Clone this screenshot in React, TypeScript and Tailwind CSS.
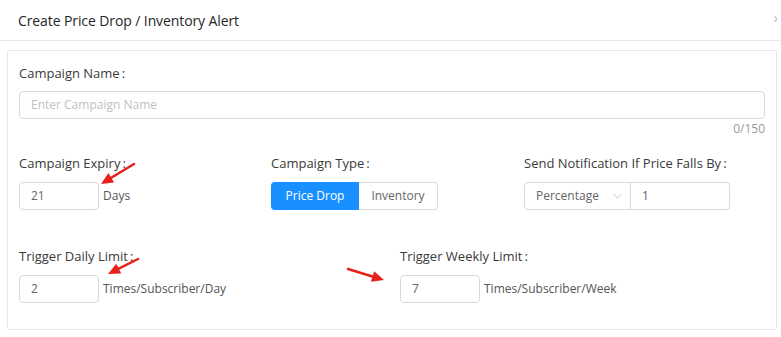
import React from "react";

const font = { fontFamily: '"Open Sans", "Noto Sans", sans-serif' };

function Arrow({ x1, y1, x2, y2 }: { x1: number; y1: number; x2: number; y2: number }) {
  const ang = Math.atan2(y2 - y1, x2 - x1);
  const len = 12;
  const w = 5.5;
  const bx = x2 - len * Math.cos(ang);
  const by = y2 - len * Math.sin(ang);
  const px = -Math.sin(ang) * w;
  const py = Math.cos(ang) * w;
  return (
    <g>
      <line x1={x1} y1={y1} x2={bx} y2={by} stroke="#e8211c" strokeWidth={2.5} strokeLinecap="round" />
      <polygon points={`${x2},${y2} ${bx + px},${by + py} ${bx - px},${by - py}`} fill="#e8211c" />
    </g>
  );
}

function Label({ children }: { children: React.ReactNode }) {
  return (
    <div className="h-[20px] leading-[20px] text-[13px] text-[#3a3a3a]">
      {children}
      <span className="ml-[2px]">:</span>
    </div>
  );
}

export default function App() {
  return (
    <div className="relative w-[781px] h-[337px] bg-white overflow-hidden text-[13px] text-[#444]" style={font}>
      <div className="h-[41px] border-b border-[#e8e8e8] flex items-center pl-[18px] pr-[3px] justify-between">
        <span className="text-[14px] font-medium text-[#262626] tracking-[-0.1px]">Create Price Drop / Inventory Alert</span>
        <span className="text-[#bbb] text-[15px] leading-none -mt-[6px]">›</span>
      </div>
      <div className="mx-[7px] mt-[9px] w-[770px] h-[280px] border border-[#e8e8e8] rounded-[2px] px-[11px] pt-[12px]">
        <Label>Campaign Name</Label>
        <div className="mt-[8px] h-[28px] border border-[#d9d9d9] rounded-[4px] flex items-center px-[11px] text-[#bfbfbf] text-[12px]">
          Enter Campaign Name
        </div>
        <div className="text-right text-[#999] text-[12px] leading-[16px] mt-[2px]">0/150</div>

        <div className="grid grid-cols-[252px_253px_1fr] mt-[16px]">
          <div>
            <Label>Campaign Expiry</Label>
            <div className="mt-[9px] flex items-center">
              <div className="w-[80px] h-[28px] border border-[#d9d9d9] rounded-[4px] flex items-center px-[11px] text-[#666] text-[12px]">21</div>
              <span className="ml-[4px] text-[12px] text-[#555]">Days</span>
            </div>
          </div>
          <div>
            <Label>Campaign Type</Label>
            <div className="mt-[9px] flex h-[28px] text-[12px]">
              <div className="w-[88px] bg-[#1890ff] text-white flex items-center justify-center rounded-l-[4px]">Price Drop</div>
              <div className="w-[79px] border border-[#d9d9d9] border-l-0 rounded-r-[4px] flex items-center justify-center text-[#666]">Inventory</div>
            </div>
          </div>
          <div>
            <Label>Send Notification If Price Falls By</Label>
            <div className="mt-[9px] flex h-[28px] text-[12px]">
              <div className="w-[107px] border border-[#d9d9d9] rounded-l-[4px] flex items-center pl-[11px] pr-[8px] justify-between text-[#666]">
                <span>Percentage</span>
                <svg width="9" height="7" viewBox="0 0 9 7"><path d="M1 1l3.5 4.5L8 1" fill="none" stroke="#ccc" strokeWidth="1" /></svg>
              </div>
              <div className="w-[99px] border border-[#d9d9d9] border-l-0 rounded-r-[4px] flex items-center px-[11px] text-[#666]">1</div>
            </div>
          </div>
        </div>

        <div className="grid grid-cols-[381px_1fr] mt-[36px]">
          <div>
            <Label>Trigger Daily Limit</Label>
            <div className="mt-[9px] flex items-center">
              <div className="w-[80px] h-[28px] border border-[#d9d9d9] rounded-[4px] flex items-center px-[11px] text-[#666] text-[12px]">2</div>
              <span className="ml-[4px] text-[12px] text-[#555]">Times/Subscriber/Day</span>
            </div>
          </div>
          <div>
            <Label>Trigger Weekly Limit</Label>
            <div className="mt-[9px] flex items-center">
              <div className="w-[80px] h-[28px] border border-[#d9d9d9] rounded-[4px] flex items-center px-[11px] text-[#666] text-[12px]">7</div>
              <span className="ml-[4px] text-[12px] text-[#555]">Times/Subscriber/Week</span>
            </div>
          </div>
        </div>
      </div>
      <svg className="absolute left-0 top-0 pointer-events-none" width="781" height="337">
        <Arrow x1={134} y1={164} x2={101} y2={184} />
        <Arrow x1={138} y1={259} x2={108} y2={274} />
        <Arrow x1={348} y1={269} x2={384} y2={280} />
      </svg>
    </div>
  );
}
